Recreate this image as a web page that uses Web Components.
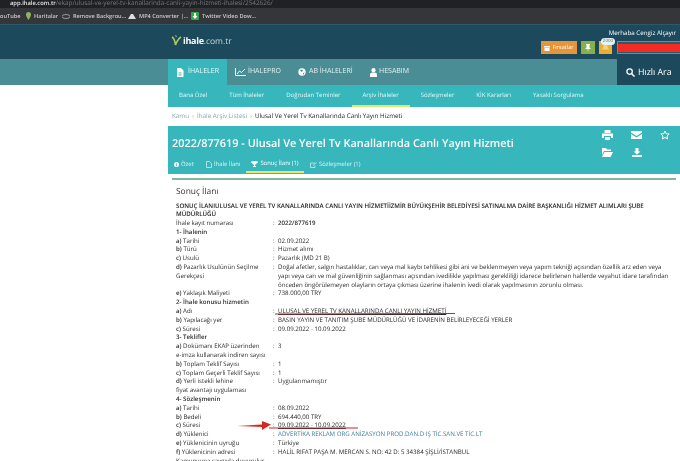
<!DOCTYPE html>
<html lang="tr"><head><meta charset="utf-8"><title>ihale</title>
<style>
html,body{margin:0;height:461px;overflow:hidden;background:#fff;font-family:"Open Sans","DejaVu Sans",sans-serif;text-rendering:geometricPrecision}
body{filter:blur(.35px)}
</style></head><body>
<x-browser-bar></x-browser-bar>
<x-site-header></x-site-header>
<x-main-nav></x-main-nav>
<x-sub-nav></x-sub-nav>
<x-crumbs></x-crumbs>
<x-title-panel></x-title-panel>
<x-notice>
  <x-row head><span>İhale kayıt numarası</span><b slot="v">2022/877619</b></x-row>
  <x-row sec>1- İhalenin</x-row>
  <x-row><b>a)</b> Tarihi<span slot="v">02.09.2022</span></x-row>
  <x-row><b>b)</b> Türü<span slot="v">Hizmet alımı</span></x-row>
  <x-row><b>c)</b> Usulü<span slot="v">Pazarlık (MD 21 B)</span></x-row>
  <x-row><b>d)</b> Pazarlık Usulünün Seçilme<br>Gerekçesi<span slot="v">Doğal afetler, salgın hastalıklar, can veya mal kaybı tehlikesi gibi ani ve beklenmeyen veya yapım tekniği açısından özellik arz eden veya<br>yapı veya can ve mal güvenliğinin sağlanması açısından ivedilikle yapılması gerekliliği idarece belirlenen hallerde veyahut idare tarafından<br>önceden öngörülemeyen olayların ortaya çıkması üzerine ihalenin ivedi olarak yapılmasının zorunlu olması.</span></x-row>
  <x-row><b>e)</b> Yaklaşık Maliyeti<span slot="v">738.000,00 TRY</span></x-row>
  <x-row sec>2- İhale konusu hizmetin</x-row>
  <x-row><b>a)</b> Adı<span slot="v" style="text-decoration:underline">ULUSAL VE YEREL TV KANALLARINDA CANLI YAYIN HİZMETİ</span></x-row>
  <x-row><b>b)</b> Yapılacağı yer<span slot="v">BASIN YAYIN VE TANITIM ŞUBE MÜDÜRLÜĞÜ VE İDARENİN BELİRLEYECEĞİ YERLER</span></x-row>
  <x-row><b>c)</b> Süresi<span slot="v">09.09.2022 - 10.09.2022</span></x-row>
  <x-row sec>3- Teklifler</x-row>
  <x-row><b>a)</b> Dokümanı EKAP üzerinden<br>e-imza kullanarak indiren sayısı<span slot="v">3</span></x-row>
  <x-row><b>b)</b> Toplam Teklif Sayısı<span slot="v">1</span></x-row>
  <x-row><b>c)</b> Toplam Geçerli Teklif Sayısı<span slot="v">1</span></x-row>
  <x-row><b>d)</b> Yerli istekli lehine<br>fiyat avantajı uygulaması<span slot="v">Uygulanmamıştır</span></x-row>
  <x-row sec>4- Sözleşmenin</x-row>
  <x-row><b>a)</b> Tarihi<span slot="v">08.09.2022</span></x-row>
  <x-row><b>b)</b> Bedeli<span slot="v">694.440,00 TRY</span></x-row>
  <x-row><b>c)</b> Süresi<span slot="v" style="text-decoration:underline">09.09.2022 - 10.09.2022</span></x-row>
  <x-row><b>d)</b> Yüklenici<span slot="v" style="color:#3f7f9c">ADVERTİKA REKLAM ORG ANİZASYON PROD.DAN.D IŞ TİC.SAN.VE TİC.LT</span></x-row>
  <x-row><b>e)</b> Yüklenicinin uyruğu<span slot="v">Türkiye</span></x-row>
  <x-row><b>f)</b> Yüklenicinin adresi<span slot="v">HALİL RIFAT PAŞA M. MERCAN S. NO: 42 D: 5 34384 ŞİŞLİ/İSTANBUL</span></x-row>
  <x-row plain>Kamuoyuna saygıyla duyurulur.</x-row>
</x-notice>
<x-annotations></x-annotations>
<script>
const def=(n,html)=>customElements.define(n,class extends HTMLElement{
  connectedCallback(){ if(this.shadowRoot)return; const s=this.attachShadow({mode:'open'}); s.innerHTML=html; }
});
const I={
 doc:'<svg width="8" height="9" viewBox="0 0 8 9"><path fill="#fff" d="M1 0h4l2.500 2.500V9H1z"/><path stroke="#37b6bb" d="M2.500 5h3M2.500 7h3"/></svg>',
 chart:'<svg width="11" height="8" viewBox="0 0 11 8"><path fill="none" stroke="#dff" d="M.5 0v7.500H11M2 6l2.500-3 2 1.500L10 1"/></svg>',
 globe:'<svg width="8" height="8" viewBox="0 0 8 8"><circle cx="4" cy="4" r="3.700" fill="#fff"/><path fill="#4a8d94" d="M2 2l2-.5 1 1.500-1.500 1zM5 5l1.500-.5L5.500 7z"/></svg>',
 user:'<svg width="7" height="9" viewBox="0 0 7 9"><circle cx="3.500" cy="2.200" r="2.100" fill="#fff"/><path fill="#fff" d="M0 9V6.500C0 5 1.500 4.500 3.500 4.500S7 5 7 6.500V9z"/></svg>',
 search:'<svg width="9" height="9" viewBox="0 0 10 10"><circle cx="4" cy="4" r="3" fill="none" stroke="#fff" stroke-width="1.400"/><path stroke="#fff" stroke-width="1.600" d="M6.300 6.300L9.500 9.500"/></svg>'
};
def('x-browser-bar',`<style>
:host{display:block;height:24px;background:#35363a;color:#c9cacc;font:600 5.600px/16px "Open Sans",sans-serif;overflow:hidden}
.u{height:8px;background:#1f2125;color:#77797d;font:400 6.400px/5px "Open Sans",sans-serif;padding-left:10px;white-space:nowrap;overflow:hidden}
.u b{color:#e8e8e8;font-weight:600;font-size:5.800px}
.b{display:flex;align-items:center;height:16px;white-space:nowrap}
.b span{display:inline-flex;align-items:center;gap:3px}
svg{flex:none}
</style><div class="u"><b>app.ihale.com.tr</b>/ekap/ulusal-ve-yerel-tv-kanallarinda-canli-yayin-hizmeti-ihalesi/2542626/</div>
<div class="b"><span style="width:26px">ouTube</span>
<span style="width:36px"><svg width="5" height="8" viewBox="0 0 5 8"><path fill="#8fb45a" d="M2.500 0a2.500 2.500 0 0 1 2.500 2.500C5 4.500 2.500 8 2.500 8S0 4.500 0 2.500A2.500 2.500 0 0 1 2.500 0z"/></svg>Haritalar</span>
<span style="width:66px"><svg width="8" height="5" viewBox="0 0 8 5"><ellipse cx="4" cy="2.500" rx="4" ry="2" fill="none" stroke="#999"/></svg>Remove Backgrou...</span>
<span style="width:63px"><svg width="8" height="5" viewBox="0 0 8 5"><path fill="#ddd" d="M0 5l3-5h2l3 5z"/></svg>MP4 Converter |...</span>
<span><svg width="8" height="8" viewBox="0 0 8 8"><rect width="8" height="8" rx="1" fill="#37a84a"/><path fill="#fff" d="M3 1h2v3h1.500L4 7 1.500 4H3z"/></svg>Twitter Video Dow...</span></div>`);
def('x-site-header',`<style>
:host{display:block;height:35px;background:#1c4a5c;border-top:1px solid #2b5a6b;box-sizing:border-box;padding-left:171px}
.w{display:flex;justify-content:space-between;height:100%;color:#fff}
.logo{display:flex;align-items:center;gap:1px;font:700 9px "Open Sans",sans-serif;padding-bottom:3px;letter-spacing:-.3px}
.logo i{font:400 8.500px "Open Sans",sans-serif;font-style:normal;color:#c5d7dc;letter-spacing:0}
.r{display:flex;flex-direction:column;align-items:flex-end;font:400 6.200px/1 "Open Sans",sans-serif;padding-top:5px;gap:5px}
.t{padding-right:4px}
.bs{display:flex;gap:4px;align-items:flex-start}
.b{height:13px;display:flex;align-items:center;justify-content:center;box-sizing:border-box;position:relative}
.o{width:36px;background:#e8953a;font-size:5.600px;gap:2px}
.g{width:14px;background:#85b04a}
.y{width:13px;background:#e9ae36}
.badge{position:absolute;left:2px;top:-3px;width:14px;height:7px;border-radius:4px;background:#e6f3f7;color:#47707f;font:400 4.500px/7px "Open Sans",sans-serif;text-align:center}
.u{width:63px;background:#2b5a6b;border:1px solid #6d8a95;border-right:0;display:flex;align-items:center;margin-left:1px}
.u i{display:block;width:100%;height:8px;background:#f52a21}
</style><div class="w"><div class="logo"><svg width="11" height="11" viewBox="0 0 11 11"><path fill="none" stroke="#a9c75b" stroke-width="1.600" d="M1 2c2 1 3 4 3.500 8C5.500 7 7 4 10 2"/><path fill="#7fd0cc" d="M4 0l2 1-1 1.500z"/></svg><span>ihale<i>.com.tr</i></span></div>
<div class="r"><div class="t">Merhaba Cengiz Alçayır</div><div class="bs">
<div class="b o"><svg width="6" height="7" viewBox="0 0 6 7"><path fill="#fff" d="M0 2h6v1.500H0zM.5 4h5v3h-5z"/></svg>Fırsatlar</div>
<div class="b g"><svg width="6" height="8" viewBox="0 0 6 8"><path fill="#fff" d="M1 0h4v.8l-.5.400V3.500L6 5H3.500L3 8l-.5-3H0l1.500-1.500V1.200L1 .8z"/></svg></div>
<div class="b y"><svg width="7" height="7" viewBox="0 0 7 7"><path fill="#f6d27a" d="M3.500 0C5 0 5.500 1 5.500 3L7 5.500H0L1.500 3C1.500 1 2 0 3.500 0z"/></svg><span class="badge">2000</span></div>
<div class="b u"><i></i></div></div></div></div>`);
def('x-main-nav',`<style>
:host{display:block;height:26px;background:#4a8d94;padding-left:168px;color:#e4f2f3;font:400 7px/26px "Open Sans",sans-serif}
.w{display:flex;height:100%}
a{display:flex;align-items:center;box-sizing:border-box;white-space:nowrap}
a.on{background:#37b6bb;color:#eafafa;width:59px;padding-left:8px;gap:4px}
.a2{width:71px;padding-left:8px;gap:2px}
.a3{width:72px;gap:3px}
.a4{gap:2px}
.s{margin-left:auto;width:63px;background:#1c4a5c;color:#fff;font-size:8.800px;display:flex;align-items:center;gap:3px;padding-left:9px;box-sizing:border-box;white-space:nowrap}
svg{flex:none}
</style><div class="w"><a class="on">${I.doc}İHALELER</a><a class="a2">${I.chart}İHALEPRO</a><a class="a3">${I.globe}AB İHALELERİ</a><a class="a4">${I.user}HESABIM</a><div class="s">${I.search}Hızlı Ara</div></div>`);
def('x-sub-nav',`<style>
:host{display:block;height:22px;margin-left:168px;background:#37b6bb;color:#e3f7f7;font:400 6px/20px "Open Sans",sans-serif}
.w{display:flex}
a{padding:0 11px;height:22px;box-sizing:border-box;white-space:nowrap}
.on{border-bottom:2px solid #e3e86a}
</style><div class="w"><a>Bana Özel</a><a>Tüm İhaleler</a><a>Doğrudan Teminler</a><a class="on">Arşiv İhaleler</a><a>Sözleşmeler</a><a>KİK Kararları</a><a>Yasaklı Sorgulama</a></div>`);
def('x-crumbs',`<style>
:host{display:block;height:19px;margin-left:168px;padding-left:4px;font:400 6.300px/18px "Open Sans",sans-serif;color:#222;white-space:nowrap}
span{color:#7fa9b5}
i{font-style:normal;margin:0 3px;color:#9dbec8}
</style><span>Kamu<i>›</i>İhale Arşiv Listesi<i>›</i></span>Ulusal Ve Yerel Tv Kanallarında Canlı Yayın Hizmeti`);
def('x-title-panel',`<style>
:host{display:block;height:48px;margin-left:168px;background:#37b6bb;color:#fff;position:relative}
h1{margin:0;padding:10px 0 0 4px;font:600 10.900px/15px "Open Sans",sans-serif;white-space:nowrap}
.t{display:flex;font:400 5.900px/1 "Open Sans",sans-serif;margin:5px 0 0 4px;color:#dff5f5}
.t a{display:flex;align-items:center;gap:2px;height:17px;box-sizing:border-box;white-space:nowrap}
.t .a1{width:27px;padding-left:2px}
.t .a2{width:47px;padding-left:7px}
.t .on{width:58px;justify-content:center;border-bottom:2px solid #e3e86a;color:#fff}
.t .a4{padding-left:6px}
.ic{position:absolute;left:425px;top:4px;display:grid;grid-template-columns:29px 29px 28px;row-gap:8px;justify-items:center}
svg{flex:none;display:block}
</style><h1>2022/877619 - Ulusal Ve Yerel Tv Kanallarında Canlı Yayın Hizmeti</h1>
<div class="t"><a class="a1"><svg width="5" height="5" viewBox="0 0 6 6"><circle cx="3" cy="3" r="3" fill="#fff"/><path stroke="#37b6bb" d="M3 2.500V5M3 1v1"/></svg>Özet</a>
<a class="a2"><svg width="6" height="7" viewBox="0 0 6 7"><path fill="none" stroke="#dff5f5" stroke-width=".7" d="M.5.500h3l2 2v4h-5z"/></svg>İhale İlanı</a>
<a class="on"><svg width="7" height="6" viewBox="0 0 7 6"><path fill="#fff" d="M1.500 0h4v2.500L4 4v1h1v1H2V5h1V4L1.500 2.500z M0 .5h7v1L5 3H2L0 1.500z"/></svg>Sonuç İlanı (1)</a>
<a class="a4"><svg width="7" height="6" viewBox="0 0 7 6"><path fill="none" stroke="#dff5f5" stroke-width=".7" d="M5 1H.5v4.500H5V3.500M3 3.500L6.500.5"/></svg>Sözleşmeler (1)</a></div>
<div class="ic">
<svg width="11" height="10" viewBox="0 0 11 10"><path fill="#fff" d="M2.500 0h6v3h-6zM0 3.500h11V8H9V6H2v2H0zM3 7h5v3H3z"/></svg>
<svg width="11" height="8" viewBox="0 0 11 8" style="margin-top:1px"><path fill="#fff" d="M0 0h11v1.500L5.500 5 0 1.500zM0 3l5.500 3.500L11 3v5H0z"/></svg>
<svg width="10" height="10" viewBox="0 0 10 10"><path fill="none" stroke="#fff" d="M5 1l1.200 2.700 3 .3-2.200 2 .6 3L5 7.500 2.400 9l.6-3L.8 4l3-.3z"/></svg>
<svg width="11" height="9" viewBox="0 0 11 9"><path fill="#fff" d="M0 0h4l1 1.500h4V3H2L0 7zM2.500 4H11L8.500 9H0z"/></svg>
<svg width="10" height="9" viewBox="0 0 10 9"><path fill="#fff" d="M3.500 0h3v3.500H8.500L5 6.500 1.500 3.500h2zM0 7h10v2H0z"/></svg>
</div>`);
def('x-notice',`<style>
:host{display:block;margin:4px 4px 0 172px;border-top:2px solid #7fb89a;padding:5px 0 0 4px;color:#2b2b2b;font:400 6.150px/8.800px "Open Sans",sans-serif;white-space:nowrap}
h2{margin:0 0 3.500px;font:400 8.400px/13px "Open Sans",sans-serif;color:#333}
.top{font-weight:600;color:#222;white-space:normal;width:470px}
</style><h2>Sonuç İlanı</h2><div class="top">SONUÇ İLANIULUSAL VE YEREL TV KANALLARINDA CANLI YAYIN HİZMETİİZMİR BÜYÜKŞEHİR BELEDİYESİ SATINALMA DAİRE BAŞKANLIĞI HİZMET ALIMLARI ŞUBE MÜDÜRLÜĞÜ</div><slot></slot>`);
def('x-row',`<style>
:host{display:grid;grid-template-columns:97px 5px 1fr}
:host([sec]),:host([plain]){display:block}
:host([sec]){font-weight:600}
:host([sec]) .c,:host([sec]) .v,:host([plain]) .c,:host([plain]) .v{display:none}
::slotted(b){font-weight:600}
</style><div><slot></slot></div><div class="c">:</div><div class="v"><slot name="v"></slot></div>`);
def('x-annotations',`<style>
:host{display:block;position:absolute;left:0;top:0;width:680px;height:461px;pointer-events:none}
svg{display:block}
</style><svg width="680" height="461" viewBox="0 0 680 461"><path d="M275 314L455 313.500" stroke="#c0282a" stroke-width="1.200" fill="none"/><path d="M269 428H358" stroke="#c0282a" stroke-width="1.200" fill="none"/><path d="M237 426L262 424.500V421L271 424.500L262 430V427z" fill="#d9261f"/></svg>`);
</script>
</body></html>
